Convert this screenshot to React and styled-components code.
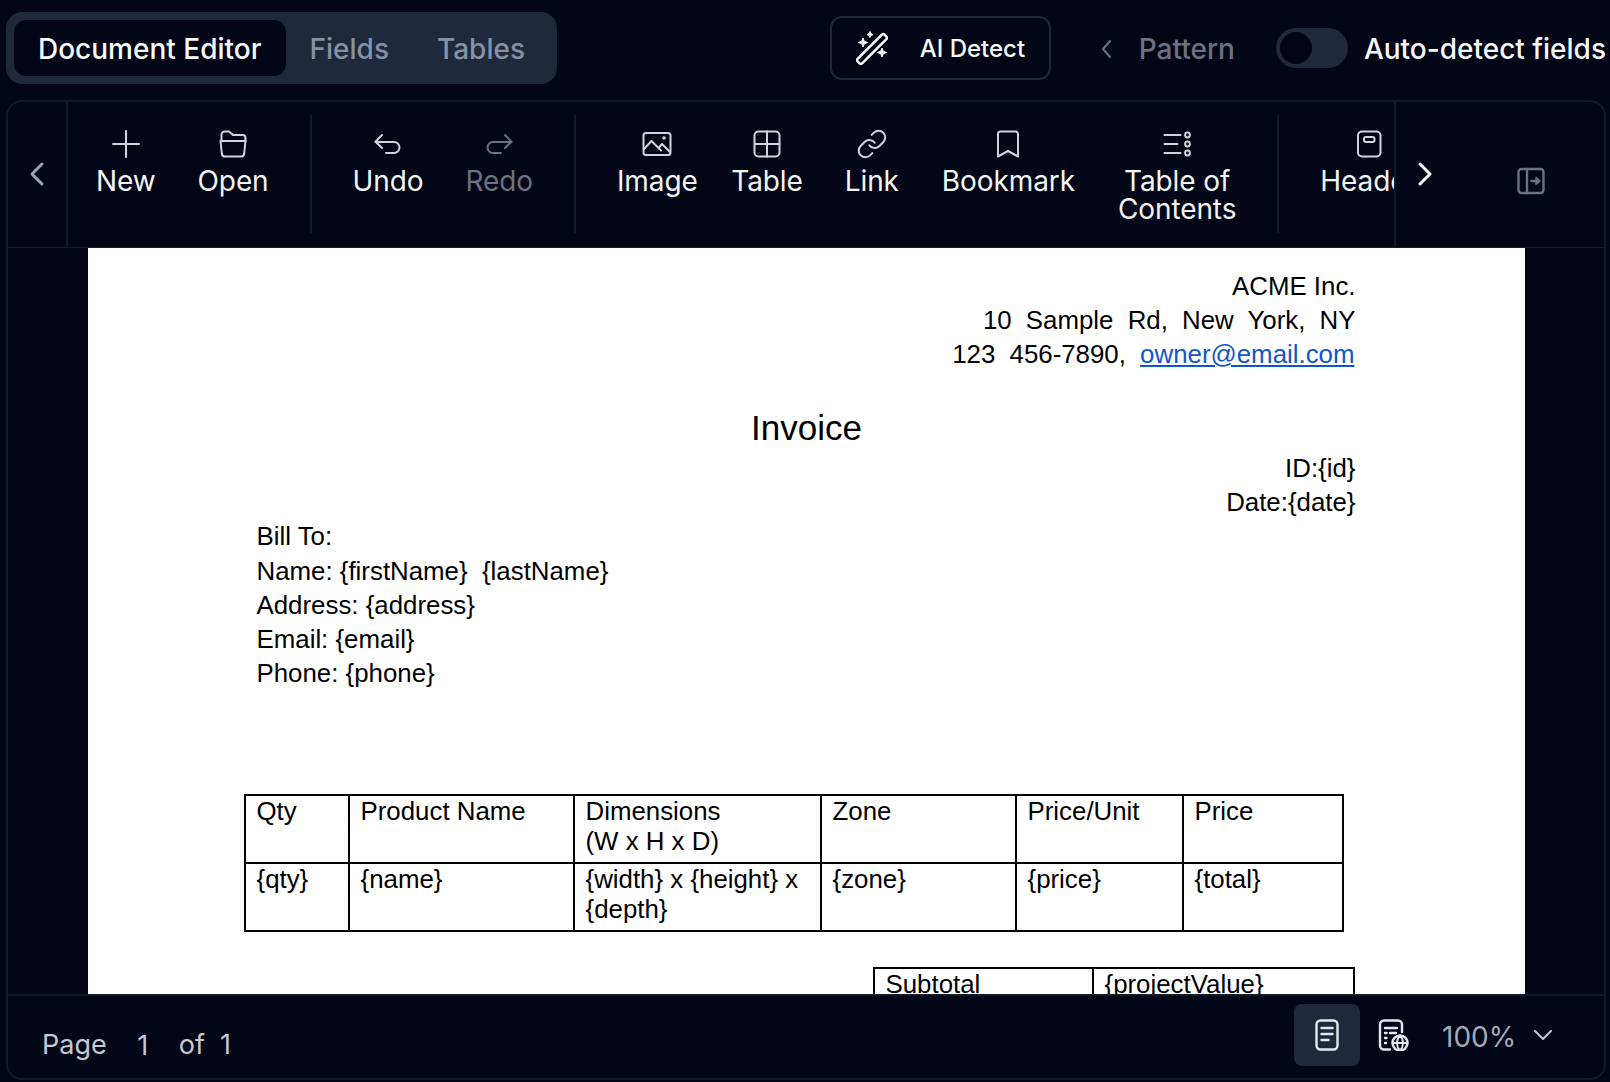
import React from 'react';
import styled, { createGlobalStyle } from 'styled-components';
import { Link as LinkIcon } from 'lucide-react';

const GlobalStyle = createGlobalStyle`
    html, body {
        margin: 0;
        padding: 0;
        background: #020617;
    }
    * {
        box-sizing: border-box;
    }
`;

const Root = styled.div`
    width: 1610px;
    height: 1082px;
    display: flex;
    flex-direction: column;
    padding: 12px 4px 2px 6px;
    overflow: hidden;
    font-family: Inter, "Liberation Sans", sans-serif;
    color: #f3f4f6;
`;

const TopBar = styled.div`
    display: flex;
    align-items: center;
    height: 72px;
    margin-bottom: 16px;
`;

const Tabs = styled.div`
    display: flex;
    align-items: stretch;
    height: 72px;
    padding: 8px;
    border-radius: 16px;
    background: #1e293b;
`;

const Tab = styled.div`
    display: flex;
    align-items: center;
    padding: 1px 24px 0;
    border-radius: 12px;
    font-size: 28px;
    font-weight: 500;
    color: ${(p) => (p.$active ? '#f8fafc' : '#8592a6')};
    background: ${(p) => (p.$active ? '#020617' : 'transparent')};
`;

const TopRight = styled.div`
    display: flex;
    align-items: center;
    margin-left: auto;
`;

const DetectButton = styled.div`
    display: flex;
    align-items: center;
    gap: 32px;
    width: 221px;
    height: 64px;
    padding: 1px 0 0 24px;
    border: 2px solid #1e293b;
    border-radius: 12px;
    font-size: 24px;
    font-weight: 500;
    color: #f8fafc;
`;

const PatternNav = styled.div`
    display: flex;
    align-items: center;
    gap: 16px;
    margin: 0 41px 0 40px;
    padding-top: 1px;
    font-size: 28px;
    font-weight: 500;
    color: #6b7280;
`;

const Track = styled.div`
    display: flex;
    width: 72px;
    height: 40px;
    padding: 4px;
    border-radius: 20px;
    background: #1e293b;
`;

const Thumb = styled.div`
    width: 32px;
    height: 32px;
    border-radius: 50%;
    background: #020617;
`;

const ToggleLabel = styled.div`
    margin-left: 16px;
    padding-top: 1px;
    font-size: 28px;
    font-weight: 500;
    white-space: nowrap;
    color: #f8fafc;
`;

const Frame = styled.div`
    flex: 1;
    min-height: 0;
    display: flex;
    flex-direction: column;
    border: 2px solid #111a2b;
    border-radius: 16px;
    overflow: hidden;
`;

const Toolbar = styled.div`
    display: flex;
    flex: none;
    height: 146px;
    border-bottom: 1px solid #111a2b;
`;

const ScrollCell = styled.div`
    flex: none;
    width: 60px;
    display: flex;
    align-items: center;
    justify-content: center;
    padding-bottom: 2px;
    border-right: 2px solid #111a2b;
    color: #9ca3af;
`;

const Strip = styled.div`
    flex: 1;
    min-width: 0;
    display: flex;
    padding: 13px 0 14px 7px;
    overflow: hidden;
`;

const Group = styled.div`
    display: flex;
    flex: none;
`;

const Separator = styled.div`
    flex: none;
    width: 2px;
    margin: 0 20px;
    background: #111a2b;
`;

const ToolItem = styled.div`
    flex: none;
    display: flex;
    flex-direction: column;
    align-items: center;
    padding: 13px ${(p) => p.$padRight ?? 21}px 0 ${(p) => p.$padLeft ?? 21}px;
    font-size: 28px;
    line-height: 28px;
    letter-spacing: -0.1px;
    text-align: center;
    color: ${(p) => (p.$disabled ? '#6b7280' : '#f3f4f6')};

    svg {
        display: block;
        flex: none;
        margin-bottom: 7px;
        color: ${(p) => (p.$disabled ? '#6b7280' : '#d1d5db')};
    }
`;

const ToolbarEnd = styled.div`
    flex: none;
    width: 210px;
    display: flex;
    align-items: center;
    border-left: 2px solid #111a2b;
    color: #f8fafc;
`;

const NextButton = styled.div`
    display: flex;
    justify-content: center;
    width: 58px;
    margin-bottom: 2px;
`;

const PanelButton = styled.div`
    display: flex;
    margin: 13px 57px 0 auto;
    color: #6b7280;
`;

const Canvas = styled.div`
    flex: 1;
    min-height: 0;
    display: flex;
    justify-content: center;
    overflow: hidden;
`;

const Page = styled.div`
    width: 1437px;
    flex: none;
    padding: 21px 169px 0 157px;
    background: #ffffff;
    color: #000000;
    font-family: "Liberation Sans", Arial, sans-serif;
    font-size: 25.85px;
    line-height: 34px;
`;

const RightLine = styled.div`
    text-align: right;
    white-space: pre;
    word-spacing: ${(p) => p.$spread || 0}px;
`;

const MailLink = styled.a`
    margin-right: 1px;
    color: #1155cc;
    text-decoration: underline;
`;

const Title = styled.div`
    margin: 36px 0 2px;
    padding-left: 13px;
    font-size: 35px;
    line-height: 42px;
    text-align: center;
`;

const BillBlock = styled.div`
    padding-left: 12px;
    white-space: pre;

    div:first-child {
        margin-bottom: 1px;
    }
`;

const Sheet = styled.table`
    table-layout: fixed;
    border-collapse: collapse;
    width: ${(p) => p.$width}px;
    margin: ${(p) => p.$margin};
    line-height: 30px;

    td {
        padding: 0 11px 6px;
        border: 2px solid #000000;
        vertical-align: top;
    }
`;

const Footer = styled.div`
    flex: none;
    height: 84px;
    display: flex;
    align-items: flex-start;
    justify-content: space-between;
    padding: 8px 45px 0 34px;
    border-top: 2px solid #111a2b;
    font-size: 28px;
    color: #c4c9d2;
`;

const PageInfo = styled.div`
    display: flex;
    align-items: center;
    height: 40px;
    margin-top: 20px;
    font-size: 27px;
`;

const PageNumber = styled.span`
    width: ${(p) => p.$width}px;
    margin-top: ${(p) => p.$drop || 0}px;
    text-align: center;
`;

const ViewControls = styled.div`
    display: flex;
    align-items: center;
`;

const ViewButton = styled.div`
    display: flex;
    align-items: center;
    justify-content: center;
    width: 66px;
    height: 62px;
    border-radius: 8px;
    color: #e5e7eb;
    background: ${(p) => (p.$active ? '#1e293b' : 'transparent')};
`;

const Zoom = styled.span`
    width: 72px;
    margin: 0 13px 0 16px;
    padding-top: 3px;
    color: #a3a9b4;
    white-space: nowrap;
`;

const Glyph = ({ children, width = 2, size = 32 }) => (
    <svg width={size} height={size} viewBox="0 0 32 32" fill="none" stroke="currentColor" strokeWidth={width} strokeLinecap="round" strokeLinejoin="round">
        {children}
    </svg>
);

const WandGlyph = () => (
    <svg width="32" height="36" viewBox="0 0 32 36" fill="none" stroke="currentColor" strokeWidth="2.4" strokeLinejoin="round">
        <rect x="-19" y="-3.2" width="38" height="6.4" rx="1.8" transform="translate(16 18) rotate(-45)" />
        <path d="M7 7l1.3 3.2L11.5 11.5 8.3 12.8 7 16 5.7 12.8 2.5 11.5 5.7 10.2Z" fill="currentColor" strokeWidth="1" />
        <path d="M14 0.5l1 2 2 1-2 1-1 2-1-2-2-1 2-1Z" fill="currentColor" strokeWidth="1" />
        <path d="M26 17l1.3 3.2 3.2 1.3-3.2 1.3L26 26l-1.3-3.2-3.2-1.3 3.2-1.3Z" fill="currentColor" strokeWidth="1" />
    </svg>
);

const PrevChevron = () => <Glyph width={3}><path d="M21 6L11 16l10 10" /></Glyph>;
const NextChevron = () => <Glyph width={3}><path d="M11 6l10 10-10 10" /></Glyph>;
const PlusGlyph = () => <Glyph><path d="M16 3v26M3 16h26" /></Glyph>;
const FolderGlyph = () => (
    <Glyph>
        <path d="M4.5 13V6.5A3 3 0 0 1 7.5 3.5H12l4 3.5h9.5a3 3 0 0 1 3 3V13" />
        <path d="M3.5 13h25l-1.4 13a3 3 0 0 1-3 2.5H7.9a3 3 0 0 1-3-2.5Z" />
    </Glyph>
);
const UndoGlyph = () => <Glyph><path d="M10 7l-6.5 6.7L10 20" /><path d="M3.5 14H22a5.5 5.5 0 0 1 0 11h-8" /></Glyph>;
const RedoGlyph = () => <Glyph><path d="M22 7l6.5 6.7L22 20" /><path d="M28.5 14H10a5.5 5.5 0 0 0 0 11h8" /></Glyph>;
const ImageGlyph = () => (
    <Glyph>
        <rect x="2.5" y="5" width="27" height="22" rx="2.5" />
        <path d="M3 21l7.5-8 9.5 9.5" />
        <path d="M17.5 20l3.5-4 8 8" />
        <circle cx="23" cy="10" r="0.8" />
    </Glyph>
);
const TableGlyph = () => <Glyph><rect x="3.5" y="3.5" width="25" height="25" rx="4" /><path d="M16 3.5v25M3.5 16h25" /></Glyph>;
const BookmarkGlyph = () => <Glyph><path d="M8.5 3.5h15a2.5 2.5 0 0 1 2.5 2.5v22.5l-10-5.5-10 5.5V6a2.5 2.5 0 0 1 2.5-2.5Z" /></Glyph>;
const ContentsGlyph = () => (
    <Glyph>
        <path d="M3.5 7h16M3.5 16h13M3.5 25h16" />
        <circle cx="26.5" cy="7" r="2.4" />
        <circle cx="26.5" cy="16" r="2.4" />
        <circle cx="26.5" cy="25" r="2.4" />
    </Glyph>
);
const HeaderGlyph = () => <Glyph><rect x="5" y="3.5" width="22.5" height="25" rx="4" /><rect x="11" y="9" width="10.5" height="5" rx="2" /></Glyph>;
const PanelGlyph = () => (
    <Glyph width={2.4}>
        <rect x="3.5" y="4" width="25" height="24" rx="3" />
        <path d="M12 4v24M16.5 16h7" />
        <path d="M21 12.5L25 16l-4 3.5Z" fill="currentColor" strokeWidth="1.4" />
    </Glyph>
);
const PageGlyph = () => (
    <Glyph width={2.4}>
        <rect x="5.5" y="1.5" width="21" height="29" rx="4" />
        <path d="M10.5 9h11M10.5 15h11M10.5 21h7" />
    </Glyph>
);
const WebPageGlyph = () => (
    <Glyph width={2.4}>
        <path d="M25 13V5.5a4 4 0 0 0-4-4H7a4 4 0 0 0-4 4v21a4 4 0 0 0 4 4h6" />
        <path d="M8 9h12M8 14h1.5M13 14h6M8 19h1.5M8 24h1" />
        <circle cx="23" cy="24" r="7.5" />
        <path d="M15.5 24h15M23 16.5c-4 4-4 11 0 15M23 16.5c4 4 4 11 0 15" strokeWidth="1.8" />
    </Glyph>
);
const DownChevron = () => <Glyph><path d="M8 12l8 8 8-8" /></Glyph>;

const toolGroups = [
    [
        { label: 'New', icon: <PlusGlyph /> },
        { label: 'Open', icon: <FolderGlyph /> },
    ],
    [
        { label: 'Undo', icon: <UndoGlyph /> },
        { label: 'Redo', icon: <RedoGlyph />, disabled: true },
    ],
    [
        { label: 'Image', icon: <ImageGlyph />, padRight: 12.5 },
        { label: 'Table', icon: <TableGlyph /> },
        { label: 'Link', icon: <LinkIcon size={32} strokeWidth={1.5} /> },
        { label: 'Bookmark', icon: <BookmarkGlyph />, padLeft: 22, padRight: 22 },
        { label: <>Table of<br />Contents</>, icon: <ContentsGlyph /> },
    ],
    [
        { label: 'Header', icon: <HeaderGlyph /> },
    ],
];

const itemCols = [104, 225, 247, 195, 167, 160];

function App() {
    return (
        <Root>
            <GlobalStyle />
            <TopBar>
                <Tabs>
                    <Tab $active>Document Editor</Tab>
                    <Tab>Fields</Tab>
                    <Tab>Tables</Tab>
                </Tabs>
                <TopRight>
                    <DetectButton>
                        <WandGlyph />
                        AI Detect
                    </DetectButton>
                    <PatternNav>
                        <Glyph><path d="M19 8l-7 8 7 8" /></Glyph>
                        Pattern
                    </PatternNav>
                    <Track><Thumb /></Track>
                    <ToggleLabel>Auto-detect fields</ToggleLabel>
                </TopRight>
            </TopBar>
            <Frame>
                <Toolbar>
                    <ScrollCell><PrevChevron /></ScrollCell>
                    <Strip>
                        {toolGroups.map((group, i) => (
                            <React.Fragment key={i}>
                                {i > 0 && <Separator />}
                                <Group>
                                    {group.map((item, j) => (
                                        <ToolItem key={j} $disabled={item.disabled} $padLeft={item.padLeft} $padRight={item.padRight}>
                                            {item.icon}
                                            <span>{item.label}</span>
                                        </ToolItem>
                                    ))}
                                </Group>
                            </React.Fragment>
                        ))}
                    </Strip>
                    <ToolbarEnd>
                        <NextButton><NextChevron /></NextButton>
                        <PanelButton><PanelGlyph /></PanelButton>
                    </ToolbarEnd>
                </Toolbar>
                <Canvas>
                    <Page>
                        <RightLine>ACME Inc.</RightLine>
                        <RightLine $spread={7}>10 Sample Rd, New York, NY</RightLine>
                        <RightLine $spread={7}>123 456-7890, <MailLink href="#">owner@email.com</MailLink></RightLine>
                        <Title>Invoice</Title>
                        <RightLine>{'ID:{id}'}</RightLine>
                        <RightLine>{'Date:{date}'}</RightLine>
                        <BillBlock>
                            <div>Bill To:</div>
                            <div>{'Name: {firstName}  {lastName}'}</div>
                            <div>{'Address: {address}'}</div>
                            <div>{'Email: {email}'}</div>
                            <div>{'Phone: {phone}'}</div>
                        </BillBlock>
                        <Sheet $width={1098} $margin="104px 0 0 -1px">
                            <colgroup>
                                {itemCols.map((w) => <col key={w} width={w} />)}
                            </colgroup>
                            <tbody>
                                <tr>
                                    <td>Qty</td>
                                    <td>Product Name</td>
                                    <td>Dimensions<br />(W x H x D)</td>
                                    <td>Zone</td>
                                    <td>Price/Unit</td>
                                    <td>Price</td>
                                </tr>
                                <tr>
                                    <td>{'{qty}'}</td>
                                    <td>{'{name}'}</td>
                                    <td>{'{width} x {height} x {depth}'}</td>
                                    <td>{'{zone}'}</td>
                                    <td>{'{price}'}</td>
                                    <td>{'{total}'}</td>
                                </tr>
                            </tbody>
                        </Sheet>
                        <Sheet $width={480} $margin="35px 1px 0 auto">
                            <colgroup>
                                <col width={219} />
                                <col width={261} />
                            </colgroup>
                            <tbody>
                                <tr>
                                    <td>Subtotal</td>
                                    <td>{'{projectValue}'}</td>
                                </tr>
                            </tbody>
                        </Sheet>
                    </Page>
                </Canvas>
                <Footer>
                    <PageInfo>
                        <span>Page</span>
                        <PageNumber $width={72} $drop={2}>1</PageNumber>
                        <span>of</span>
                        <PageNumber $width={41}>1</PageNumber>
                    </PageInfo>
                    <ViewControls>
                        <ViewButton $active><PageGlyph /></ViewButton>
                        <ViewButton><WebPageGlyph /></ViewButton>
                        <Zoom>100%</Zoom>
                        <DownChevron />
                    </ViewControls>
                </Footer>
            </Frame>
        </Root>
    );
}

export default App;
